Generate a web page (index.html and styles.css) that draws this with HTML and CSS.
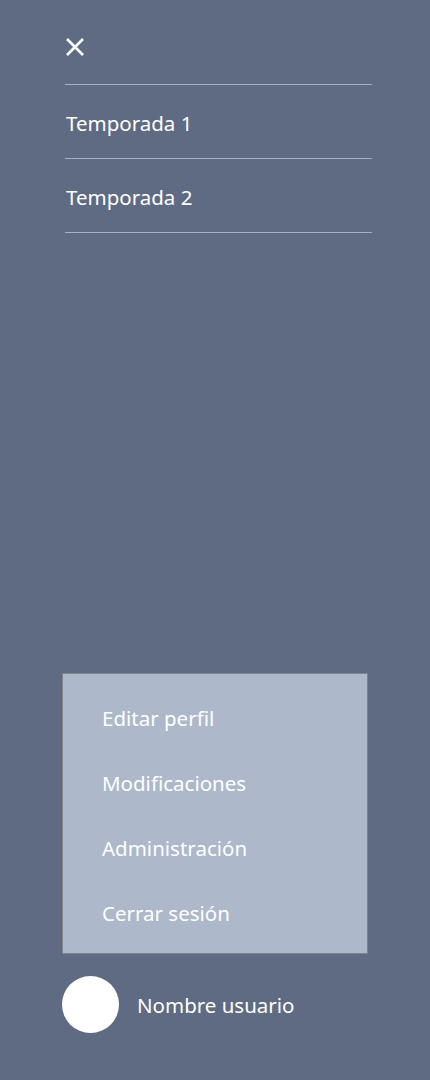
FILE: index.html
```html
<!DOCTYPE html>
<html lang="es">
<head>
<meta charset="utf-8">
<link rel="stylesheet" href="styles.css">
</head>
<body>
<div class="sidebar">
  <nav class="top">
    <button class="close" aria-label="Cerrar">
      <svg width="20" height="20" viewBox="0 0 20 20"><path d="M2 2 L18 18 M18 2 L2 18" stroke="#fff" stroke-width="2.6" fill="none"/></svg>
    </button>
    <ul class="seasons">
      <li>Temporada 1</li>
      <li>Temporada 2</li>
    </ul>
  </nav>
  <div class="bottom">
    <ul class="menu">
      <li>Editar perfil</li>
      <li>Modificaciones</li>
      <li>Administración</li>
      <li>Cerrar sesión</li>
    </ul>
    <div class="user">
      <div class="avatar"></div>
      <span class="name">Nombre usuario</span>
    </div>
  </div>
</div>
</body>
</html>
```
FILE: styles.css
```css
* { box-sizing: border-box; }
html, body { margin: 0; padding: 0; }
body {
  background: #5f6b82;
  font-family: "Noto Sans", "Open Sans", sans-serif;
  color: #fff;
  height: 1080px;
}
.sidebar {
  height: 1080px;
  display: flex;
  flex-direction: column;
}
.top {
  margin-left: 65px;
  width: 307px;
  padding-top: 37px;
}
.close {
  background: none;
  border: 0;
  padding: 0;
  margin-left: 0;
  width: 20px;
  height: 20px;
  display: block;
  cursor: pointer;
}
.seasons {
  list-style: none;
  margin: 27px 0 0 0;
  padding: 0;
  border-top: 1px solid #a9b2c2;
}
.seasons li {
  height: 74px;
  border-bottom: 1px solid #a9b2c2;
  display: flex;
  align-items: center;
  padding-top: 3px;
  font-size: 20.5px;
  padding-left: 1px;
}
.bottom {
  margin-top: auto;
  padding-left: 62px;
  padding-bottom: 47px;
}
.menu {
  list-style: none;
  margin: 0;
  padding: 11px 0 16px 39px;
  width: 306px;
  height: 281px;
  background: #adb8ca;
  border: 1px solid #7f8388;
}
.menu li {
  height: 65px;
  display: flex;
  align-items: center;
  font-size: 20.5px;
}
.user {
  margin-top: 22px;
  display: flex;
  align-items: center;
  gap: 18px;
}
.avatar {
  width: 57px;
  height: 57px;
  border-radius: 50%;
  background: #fff;
}
.name {
  font-size: 20.5px;
}
```
